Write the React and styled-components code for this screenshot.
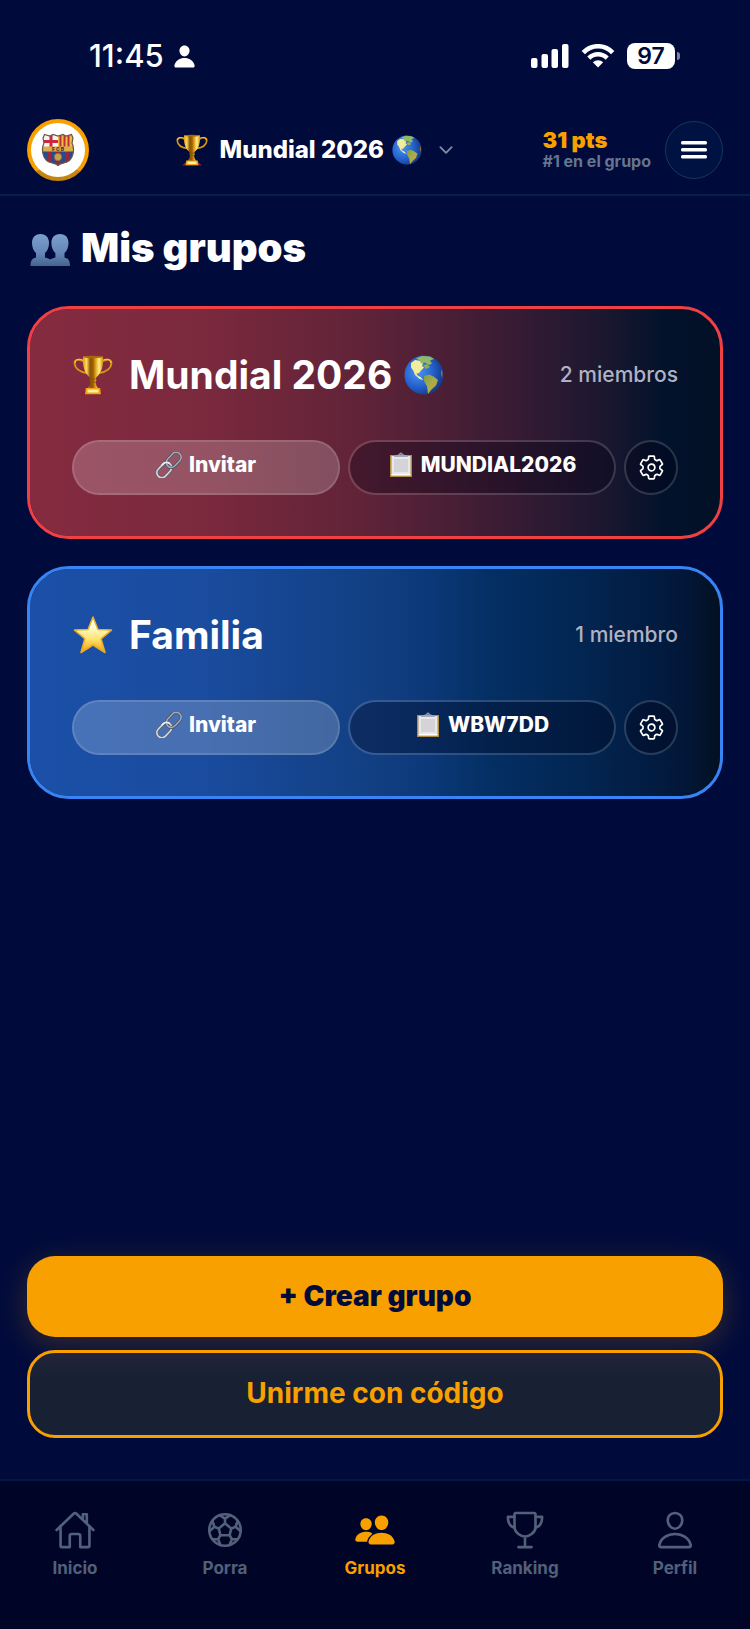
import React from "react";
import styled, { createGlobalStyle, css } from "styled-components";
import {
  IoHomeOutline,
  IoFootballOutline,
  IoPeople,
  IoTrophyOutline,
  IoPersonOutline,
  IoPerson,
  IoSettingsOutline,
  IoChevronDown,
} from "react-icons/io5";

const color = {
  page: "#000b3b",
  nav: "#000528",
  line: "#04204a",
  gold: "#f7a000",
  muted: "#66758f",
  navMuted: "#526079",
};

const GlobalStyle = createGlobalStyle`
  *, *::before, *::after { box-sizing: border-box; }
  body { margin: 0; background: ${color.page}; color: #fff; font-family: Inter, "Liberation Sans", sans-serif; }
  button { font: inherit; color: inherit; margin: 0; padding: 0; cursor: pointer; }
  svg { display: block; flex: none; }
`;

/* ---------- drawings ---------- */

const TrophyEmoji = ({ size }) => (
  <svg width={size} height={size} viewBox="0 0 40 40" aria-hidden="true">
    <defs>
      <linearGradient id="cup" x1="0" x2="1" y1="0" y2="0">
        <stop offset="0" stopColor="#e59a0a" />
        <stop offset=".18" stopColor="#ffd95a" />
        <stop offset=".36" stopColor="#8a5205" />
        <stop offset=".5" stopColor="#9a5f06" />
        <stop offset=".62" stopColor="#e29a0c" />
        <stop offset=".8" stopColor="#fff08a" />
        <stop offset="1" stopColor="#d98a08" />
      </linearGradient>
    </defs>
    <path d="M7.500 39.500 12.500 35h15l5 4.500z" fill="#8c2030" />
    <path d="M11 6.500C6 3.500 1.300 4.500 1.600 8.500c.5 5 5.500 8.500 12.400 9.500M29 6.500c5-3 9.700-2 9.400 2-.5 5-5.500 8.500-12.400 9.500" fill="none" stroke="#d99412" strokeWidth="2" />
    <path d="M11 5.600C6.500 3.200 2 4 2.200 8M29 5.600c4.500-2.400 9-1.600 8.800 2.400" fill="none" stroke="#ffe07a" strokeWidth=".8" />
    <path d="M10 1.500h20c.5 8-.7 15.500-6.300 20.500-.9 1-1.200 1.800-.2 3l-.9 2c.2 3 1.100 5 2.900 6.500h-11c1.800-1.500 2.700-3.500 2.900-6.500l-.9-2c1-1.200.7-2-.2-3C10.700 17 9.500 9.500 10 1.500z" fill="url(#cup)" />
    <ellipse cx="20" cy="1.900" rx="10" ry="1.100" fill="#a9690a" />
    <path d="M17.500 24h5M17.800 27h4.400" stroke="#8a5506" strokeWidth="1" />
    <path d="M12.800 33h14.400l.8 6.200H12z" fill="#eea516" />
    <path d="M14.500 34.500h11v3h-11z" fill="#fff0a0" />
  </svg>
);

const GlobeEmoji = ({ size }) => (
  <svg width={size} height={size} viewBox="0 0 40 40" aria-hidden="true">
    <defs>
      <radialGradient id="sea" cx=".35" cy=".42" r=".65">
        <stop offset="0" stopColor="#4a94f5" />
        <stop offset=".6" stopColor="#2460cc" />
        <stop offset="1" stopColor="#143a85" />
      </radialGradient>
      <linearGradient id="south" x1="0" x2="1" y1="0" y2="1">
        <stop offset="0" stopColor="#7f9d42" />
        <stop offset=".5" stopColor="#a8ad4c" />
        <stop offset="1" stopColor="#e5922b" />
      </linearGradient>
    </defs>
    <circle cx="20" cy="20" r="19.500" fill="url(#sea)" />
    <path d="M7 8 11 5l5 .8 3 2.700-1 2.500 2 1.500-3 3-2 2.500-2.500.5 1 2 3 1.500 3 3-4-1-4.500-4-1.500-4-2.500-3.500z" fill="#f2ed9d" />
    <path d="M12 3.200 18 1l8 .6 4 2.400-4 1.500 2 3-3 1.500-4-2.500-4 1-1-3z" fill="#91b967" />
    <path d="m19 10.500 4-1.500 3 3-4 2z" fill="#8fae52" />
    <path d="m20 21 5-1.500 4.500 2 4.500 3.500-2 5.500-4.500 4-3.500 4.500-1-7.500-3-5.500z" fill="url(#south)" />
    <path d="M37.500 14c1.200 3 1.300 6 .7 9l-1.300-4z" fill="#a66b35" />
  </svg>
);

const StarEmoji = ({ size }) => (
  <svg width={size} height={size} viewBox="0 0 40 40" aria-hidden="true">
    <defs>
      <linearGradient id="star" x1="0" x2="0" y1="0" y2="1">
        <stop offset="0" stopColor="#fff" />
        <stop offset=".3" stopColor="#fff9ce" />
        <stop offset=".62" stopColor="#ffe56d" />
        <stop offset="1" stopColor="#f59b08" />
      </linearGradient>
    </defs>
    <path d="M20 2l5 12.500 13.500.6L28 23.800 32 37.500 20 30 8 37.500l3.800-13.700L1.500 15.100 15 14.500z" fill="url(#star)" stroke="#e9ad27" strokeWidth="1.500" strokeLinejoin="round" />
  </svg>
);

const BustsEmoji = ({ size }) => (
  <svg width={size} height={size} viewBox="0 0 40 40" aria-hidden="true">
    <defs>
      <linearGradient id="busts" x1="0" x2="0" y1="0" y2="1">
        <stop offset="0" stopColor="#7d9fce" />
        <stop offset=".6" stopColor="#6487b8" />
        <stop offset="1" stopColor="#46638f" />
      </linearGradient>
    </defs>
    <path d="M10.500 6c5.500 0 8.500 3.800 8.500 9 0 4.200-1.500 8-4 10v4.500c2.600.7 4.200 1.200 5.200 2 1-.8 2.600-1.300 5.200-2V25c-2.500-2-4-5.800-4-10 0-5.200 3-9 8.600-9s8.500 3.800 8.500 9c0 4.200-1.500 8-4 10v4.500c3.500.9 5.500 2.500 5.500 8.500H.5c0-6 2-7.600 5.500-8.500V25c-2.500-2-4-5.800-4-10 0-5.200 3-9 8.500-9z" fill="url(#busts)" />
  </svg>
);

const LinkEmoji = ({ size }) => (
  <svg width={size} height={size} viewBox="0 0 26 26" fill="none" aria-hidden="true">
    <g transform="rotate(-47 13 13)">
      <rect x="-2.500" y="8" width="17" height="10" rx="5" stroke="#565d6b" strokeWidth="3" />
      <rect x="-2.500" y="8" width="17" height="10" rx="5" stroke="#d3d7df" strokeWidth="1.600" />
      <rect x="11.500" y="8" width="17" height="10" rx="5" stroke="#4b4f5c" strokeWidth="3" />
      <rect x="11.500" y="8" width="17" height="10" rx="5" stroke="#a4abb9" strokeWidth="1.500" />
      <path d="M8 8h1.500c2.600 0 4.600 1.800 5 4.500" stroke="#e9ecf2" strokeWidth="1.800" />
    </g>
  </svg>
);

const ClipboardEmoji = ({ size }) => (
  <svg width={size} height={size} viewBox="0 0 26 26" aria-hidden="true">
    <path d="M2 3h22v22H2z" fill="#b08c3e" />
    <path d="M3.500 4h19v19.300h-19z" fill="#e8e8ec" />
    <path d="M6 7h14v13H6z" fill="#d3d3d8" />
    <path d="M3.500 22h19v1.500h-19z" fill="#fff" />
    <path d="M6 5c0-1.600 3.200-2.200 5.200-2.400C11.300 1.300 12 .6 13 .6s1.700.7 1.800 2C16.800 2.800 20 3.400 20 5z" fill="#a0a9ba" />
    <circle cx="13" cy="2.300" r=".8" fill="#555d69" />
  </svg>
);

const Crest = () => (
  <svg width="34" height="34" viewBox="0 0 34 34" aria-hidden="true">
    <defs>
      <clipPath id="shield">
        <path d="M3.500 1.500 9 3l3-1.500L17 3l5-1.500L25 3l5.500-1.500L32 5l-1 5c3 6 1.500 16-5 19-4 1.500-7 1.500-9 3.500-2-2-5-2-9-3.500C1.500 26 0 16 3 10L2 5z" />
      </clipPath>
    </defs>
    <g clipPath="url(#shield)">
      <path d="M0 0h34v34H0z" fill="#264a91" />
      <path d="M0 0h17v14H0z" fill="#f6f2ee" />
      <path d="M8.500 0h3v14h-3zM0 7h17v3H0z" fill="#cb2740" />
      <path d="M17 0h17v14H17z" fill="#edbd45" />
      <path d="M18.500 0h2v14h-2zM22.500 0h2v14h-2zM26.500 0h2v14h-2z" fill="#bd3038" />
      <path d="M6 18h4.500v16H6zM14.500 18h5v16h-5zM24 18h4.500v16H24z" fill="#95283f" />
      <path d="M0 13.500h34v5H0z" fill="#dcae4b" />
      <circle cx="17" cy="24" r="3.700" fill="#cba044" stroke="#8a6d3b" strokeWidth=".7" />
    </g>
    <text x="17" y="17.800" textAnchor="middle" fontSize="5" fontWeight="800" fill="#3b3427">F C B</text>
    <path d="M3.500 1.500 9 3l3-1.500L17 3l5-1.500L25 3l5.500-1.500L32 5l-1 5c3 6 1.500 16-5 19-4 1.500-7 1.500-9 3.500-2-2-5-2-9-3.500C1.500 26 0 16 3 10L2 5z" fill="none" stroke="#685a48" strokeWidth="1.200" />
  </svg>
);

const SignalIcon = () => (
  <svg width="38" height="24" viewBox="0 0 38 24" fill="#fff" aria-hidden="true">
    <rect x="0" y="14" width="6.500" height="10" rx="2" />
    <rect x="10.500" y="10" width="6.500" height="14" rx="2" />
    <rect x="20.500" y="5" width="6.500" height="19" rx="2" />
    <rect x="31" y="0" width="6.500" height="24" rx="2" />
  </svg>
);

const WifiIcon = () => (
  <svg width="34" height="24" viewBox="0 0 34 24" aria-hidden="true">
    <path d="M2.300 8.600C10.500.1 23.500.1 31.700 8.600" fill="none" stroke="#fff" strokeWidth="4.600" />
    <path d="M7.800 14.100c5.300-5.200 13.100-5.200 18.400 0" fill="none" stroke="#fff" strokeWidth="4.400" />
    <path d="M11.800 18.200c3-2.700 7.400-2.700 10.400 0L17 23.500z" fill="#fff" />
  </svg>
);

const MenuIcon = () => (
  <svg width="26" height="18" viewBox="0 0 26 18" fill="#fff" aria-hidden="true">
    <rect y="0" width="26" height="3.500" rx="1.500" />
    <rect y="7" width="26" height="3.500" rx="1.500" />
    <rect y="14" width="26" height="3.500" rx="1.500" />
  </svg>
);

/* ---------- layout ---------- */

const Screen = styled.div`
  min-height: 100vh;
  display: flex;
  flex-direction: column;
`;

const StatusBar = styled.div`
  display: flex;
  align-items: center;
  justify-content: space-between;
  height: 112px;
  padding: 0 70px 0 89px;
`;

const StatusGroup = styled.div`
  display: flex;
  align-items: center;
  gap: ${({ $gap }) => $gap}px;
`;

const Clock = styled.time`
  font-size: 31px;
  line-height: 36px;
  font-weight: 500;
`;

const Battery = styled.div`
  display: flex;
  align-items: center;
  gap: 2px;
  &::after {
    content: "";
    width: 3px;
    height: 8px;
    border-radius: 0 3px 3px 0;
    background: #7f849c;
  }
`;

const BatteryLevel = styled.span`
  width: 48px;
  border-radius: 8px;
  background: #fff;
  color: ${color.page};
  font-size: 23px;
  line-height: 26px;
  font-weight: 600;
  text-align: center;
`;

const Header = styled.header`
  display: flex;
  align-items: center;
  justify-content: space-between;
  height: 84px;
  padding: 0 27px 6px;
  border-bottom: 2px solid ${color.line};
`;

const Avatar = styled.button`
  display: grid;
  place-items: center;
  width: 62px;
  height: 62px;
  border: 4px solid ${color.gold};
  border-bottom-color: #c5850e;
  border-radius: 50%;
  background: #fff;
`;

const GroupPicker = styled.button`
  display: flex;
  align-items: center;
  border: 0;
  background: none;
  font-size: 24px;
  line-height: 32px;
  font-weight: 800;
`;

const PickerName = styled.span`
  margin: 0 8px 0 12px;
`;

const PickerArrow = styled(IoChevronDown)`
  margin-left: 14px;
  color: #7f8ba5;
`;

const HeaderEnd = styled.div`
  display: flex;
  align-items: center;
  gap: 14px;
`;

const Points = styled.div`
  display: flex;
  flex-direction: column;
  font-size: 22px;
  line-height: 22px;
  font-weight: 900;
  color: ${color.gold};
`;

const Place = styled.span`
  font-size: 16px;
  line-height: 20px;
  font-weight: 700;
  color: ${color.muted};
`;

const MenuButton = styled.button`
  display: grid;
  place-items: center;
  width: 58px;
  height: 58px;
  border: 1px solid #17365a;
  border-radius: 50%;
  background: #001242;
`;

const Main = styled.main`
  flex: 1;
  display: flex;
  flex-direction: column;
  padding: 28px 27px 41px;
`;

const PageTitle = styled.h1`
  display: flex;
  align-items: center;
  gap: 11px;
  margin: 0 0 34px;
  padding-left: 3px;
  font-size: 40px;
  line-height: 48px;
  font-weight: 900;
`;

const GroupList = styled.ul`
  display: grid;
  gap: 27px;
  margin: 0;
  padding: 0;
  list-style: none;
`;

const cardTone = {
  red: css`
    border-color: #f04044;
    background: linear-gradient(90deg, #852b40 0%, #7b293d 25%, #5f2338 49%, #3b1c34 68%, #1c1730 83%, #02122b 92%, #021126 100%) padding-box;
  `,
  blue: css`
    border-color: #3884f5;
    background: linear-gradient(90deg, #1b50a8 0%, #1a4c9f 25%, #123f82 50%, #0b3878 58%, #042f63 67%, #02244f 82%, #021738 95%, #031020 100%) padding-box;
  `,
};

const Card = styled.li`
  padding: 42px 42px 41px;
  border: 3px solid;
  border-radius: 42px;
  ${({ $tone }) => cardTone[$tone]}
`;

const CardHead = styled.div`
  display: flex;
  align-items: center;
  justify-content: space-between;
  margin-bottom: 41px;
`;

const CardTitle = styled.h2`
  display: flex;
  align-items: center;
  gap: 12px;
  margin: 0;
  padding-left: 1px;
  font-size: 39px;
  line-height: 48px;
  font-weight: 700;
`;

const CardName = styled.span`
  padding-left: 4px;
`;

const Members = styled.span`
  font-size: 21px;
  line-height: 26px;
  font-weight: 500;
  color: #b0b2c2;
`;

const Actions = styled.div`
  display: grid;
  grid-template-columns: 1fr 1fr 54px;
  gap: 8px;
`;

const Pill = styled.button`
  display: flex;
  align-items: center;
  justify-content: center;
  gap: 7px;
  height: 55px;
  padding-bottom: 5px;
  border: 2px solid ${({ $light }) => ($light ? "rgba(255,255,255,.3)" : "rgba(255,255,255,.15)")};
  border-radius: 28px;
  background: ${({ $light }) => ($light ? "rgba(255,255,255,.2)" : "rgba(0,0,20,.3)")};
  background-clip: padding-box;
  font-size: 21px;
  line-height: 26px;
  font-weight: 800;
`;

const GearButton = styled(Pill)`
  padding: 0;
`;

const MainActions = styled.div`
  display: grid;
  gap: 13px;
  margin-top: auto;
`;

const ActionButton = styled.button`
  border-radius: 28px;
  font-size: 28px;
  line-height: 33px;
  ${({ $primary }) =>
    $primary
      ? css`
          padding: 24px;
          border: 0;
          background: ${color.gold};
          color: ${color.page};
          font-weight: 900;
          box-shadow: 0 8px 30px rgba(247, 160, 0, 0.22);
        `
      : css`
          padding: 24px 24px 25px;
          border: 3px solid ${color.gold};
          background: linear-gradient(#22243a, #182034 30%) padding-box;
          color: ${color.gold};
          font-weight: 700;
        `}
`;

const TabBar = styled.nav`
  display: grid;
  grid-template-columns: repeat(5, 1fr);
  height: 150px;
  padding-top: 28px;
  border-top: 2px solid #001740;
  background: ${color.nav};
`;

const Tab = styled.a`
  display: flex;
  flex-direction: column;
  align-items: center;
  gap: 6px;
  color: ${({ $active }) => ($active ? color.gold : color.navMuted)};
  font-size: 17px;
  line-height: 22px;
  font-weight: 700;
  text-decoration: none;
`;

const groups = [
  { tone: "red", Emoji: TrophyEmoji, name: "Mundial 2026", globe: true, members: "2 miembros", code: "MUNDIAL2026" },
  { tone: "blue", Emoji: StarEmoji, name: "Familia", members: "1 miembro", code: "WBW7DD" },
];

const tabs = [
  { label: "Inicio", Icon: IoHomeOutline },
  { label: "Porra", Icon: IoFootballOutline },
  { label: "Grupos", Icon: IoPeople, active: true },
  { label: "Ranking", Icon: IoTrophyOutline },
  { label: "Perfil", Icon: IoPersonOutline },
];

const GroupCard = ({ tone, Emoji, name, globe, members, code }) => (
  <Card $tone={tone}>
    <CardHead>
      <CardTitle>
        <Emoji size={40} />
        <CardName>{name}</CardName>
        {globe && <GlobeEmoji size={40} />}
      </CardTitle>
      <Members>{members}</Members>
    </CardHead>
    <Actions>
      <Pill type="button" $light>
        <LinkEmoji size={26} />
        Invitar
      </Pill>
      <Pill type="button">
        <ClipboardEmoji size={26} />
        {code}
      </Pill>
      <GearButton type="button" aria-label={`Ajustes de ${name}`}>
        <IoSettingsOutline size={27} />
      </GearButton>
    </Actions>
  </Card>
);

export default function App() {
  return (
    <Screen>
      <GlobalStyle />
      <StatusBar>
        <StatusGroup $gap={8}>
          <Clock>11:45</Clock>
          <IoPerson size={25} />
        </StatusGroup>
        <StatusGroup $gap={12}>
          <SignalIcon />
          <WifiIcon />
          <Battery>
            <BatteryLevel>97</BatteryLevel>
          </Battery>
        </StatusGroup>
      </StatusBar>
      <Header>
        <Avatar type="button" aria-label="Mi equipo">
          <Crest />
        </Avatar>
        <GroupPicker type="button">
          <TrophyEmoji size={32} />
          <PickerName>Mundial 2026</PickerName>
          <GlobeEmoji size={30} />
          <PickerArrow size={20} />
        </GroupPicker>
        <HeaderEnd>
          <Points>
            31 pts
            <Place>#1 en el grupo</Place>
          </Points>
          <MenuButton type="button" aria-label="Menú">
            <MenuIcon />
          </MenuButton>
        </HeaderEnd>
      </Header>
      <Main>
        <PageTitle>
          <BustsEmoji size={40} />
          Mis grupos
        </PageTitle>
        <GroupList>
          {groups.map((group) => (
            <GroupCard key={group.code} {...group} />
          ))}
        </GroupList>
        <MainActions>
          <ActionButton type="button" $primary>
            + Crear grupo
          </ActionButton>
          <ActionButton type="button">Unirme con código</ActionButton>
        </MainActions>
      </Main>
      <TabBar>
        {tabs.map(({ label, Icon, active }) => (
          <Tab key={label} href="#" $active={active} aria-current={active ? "page" : undefined}>
            <Icon size={42} />
            {label}
          </Tab>
        ))}
      </TabBar>
    </Screen>
  );
}
